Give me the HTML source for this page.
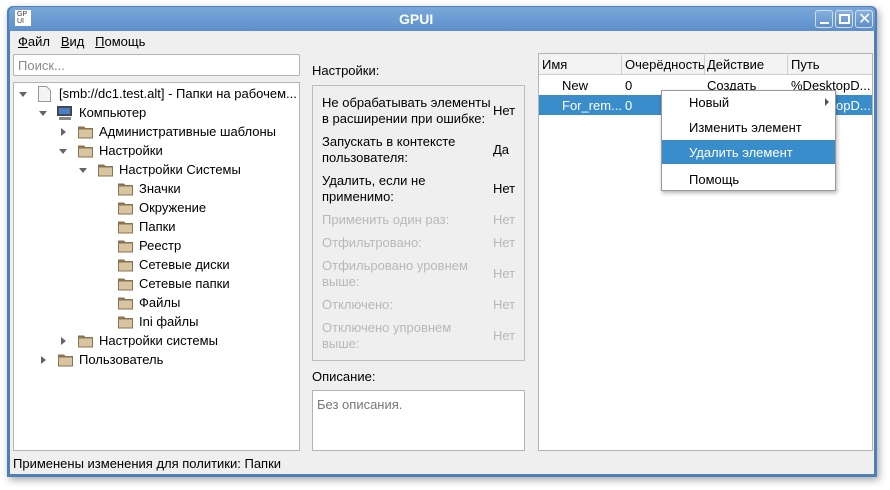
<!DOCTYPE html>
<html><head><meta charset="utf-8"><style>
*{box-sizing:border-box;margin:0;padding:0}
body{width:890px;height:490px;background:#fff;font-family:"Liberation Sans","DejaVu Sans",sans-serif;font-size:13px;color:#000;position:relative;overflow:hidden}
.a{position:absolute;white-space:nowrap}
.win{position:absolute;left:7px;top:6px;width:870px;height:471px;background:#4f7fb9;border-radius:6px 6px 0 0;box-shadow:2px 3px 8px rgba(0,0,0,.35)}
.tb{position:absolute;left:2px;top:1px;right:2px;height:24px;background:linear-gradient(#7aa8da,#5d8fcb);border-radius:5px 5px 0 0}
.body{position:absolute;left:3px;top:25px;right:3px;bottom:3px;background:#efefef}
.box{position:absolute;background:#fff;border:1px solid #b4b4b4}
.gb{position:absolute;border:1px solid #bdbdbd}
.fold{position:absolute;width:17px;height:14px}
.tri{position:absolute;width:0;height:0}
.td{border-left:4px solid transparent;border-right:4px solid transparent;border-top:5px solid #666}
.tr{border-top:4px solid transparent;border-bottom:4px solid transparent;border-left:5px solid #666}
.dis{color:#b8b8b8}
.wb{position:absolute;top:3px;width:18px;height:18px;border:1px solid #cfe0f3;border-radius:3px;background:linear-gradient(#86b0de,#5f8fc9)}
</style></head><body>
<svg width="0" height="0" style="position:absolute"><defs>
<symbol id="f" viewBox="0 0 17 14"><path d="M1 1.5h6l1.5 1.5H16v10.5H1z" fill="#8a7352"/><rect x="1.5" y="4" width="14" height="9" fill="#d9c4a0" stroke="#8a7352" stroke-width="1"/></symbol>
</defs></svg>
<div class="win">
<div class="tb">
<div class="a" style="left:6px;top:3px;width:16px;height:16px;background:#fff;font-size:7px;line-height:7px;padding:1px 2px;color:#333">GP<br>UI</div>
<div class="a" style="left:390px;top:4px;color:#fff;font-weight:bold;font-size:14px">GPUI</div>
<div class="wb" style="left:806px"><div class="a" style="left:4px;top:11px;width:9px;height:2px;background:#fff"></div></div>
<div class="wb" style="left:826px"><div class="a" style="left:3px;top:3px;width:11px;height:10px;border:2px solid #fff"></div></div>
<div class="wb" style="left:846px"><div class="a" style="left:2px;top:-2px;color:#fff;font-size:16px">✕</div></div>
</div>
<div class="body">
<div class="a" style="left:8px;top:3px"><u>Ф</u>айл&nbsp;&nbsp;&nbsp;<u>В</u>ид&nbsp;&nbsp;&nbsp;<u>П</u>омощь</div>
<div class="box" style="left:3px;top:23px;width:287px;height:22px;border-radius:2px"><span class="a" style="left:4px;top:3px;color:#888">Поиск...</span></div>
<div class="box" style="left:3px;top:51px;width:287px;height:369px"></div>
<div class="a" style="left:3px;top:425px">Применены изменения для политики: Папки</div>
<div class="a" style="left:302px;top:32px">Настройки:</div>
<div class="gb" style="left:302px;top:54px;width:213px;height:276px"></div>
<div class="a" style="left:302px;top:338px">Описание:</div>
<div class="box" style="left:302px;top:359px;width:213px;height:61px"><span class="a" style="left:4px;top:6px;color:#777">Без описания.</span></div>
<div class="box" style="left:528px;top:22px;width:335px;height:398px"></div>
</div>
</div>
<!-- tree -->
<div class="tri td" style="left:19px;top:92px"></div>
<svg class="a" style="left:38px;top:86px" width="13" height="16"><path d="M.5 .5h8l4 4v11H.5z" fill="#f4f4f4" stroke="#999"/></svg>
<div class="a" style="left:59px;top:86px">[smb://dc1.test.alt] - Папки на рабочем...</div>
<div class="tri td" style="left:39px;top:111px"></div>
<svg class="a" style="left:56px;top:105px" width="18" height="16"><rect x="1.5" y="1.5" width="14" height="9" fill="#3b4b6b" stroke="#444"/><rect x="3" y="3" width="11" height="6" fill="#4d7ec0"/><rect x="3" y="12" width="12" height="3" fill="#888"/></svg>
<div class="a" style="left:79px;top:105px">Компьютер</div>
<div class="tri tr" style="left:61px;top:128px"></div><svg class="fold" style="left:77px;top:125px"><use href="#f"/></svg><div class="a" style="left:99px;top:124px">Административные шаблоны</div>
<div class="tri td" style="left:59px;top:149px"></div><svg class="fold" style="left:77px;top:144px"><use href="#f"/></svg><div class="a" style="left:99px;top:143px">Настройки</div>
<div class="tri td" style="left:79px;top:168px"></div><svg class="fold" style="left:97px;top:163px"><use href="#f"/></svg><div class="a" style="left:119px;top:162px">Настройки Системы</div>
<svg class="fold" style="left:117px;top:182px"><use href="#f"/></svg><div class="a" style="left:139px;top:181px">Значки</div>
<svg class="fold" style="left:117px;top:201px"><use href="#f"/></svg><div class="a" style="left:139px;top:200px">Окружение</div>
<svg class="fold" style="left:117px;top:220px"><use href="#f"/></svg><div class="a" style="left:139px;top:219px">Папки</div>
<svg class="fold" style="left:117px;top:239px"><use href="#f"/></svg><div class="a" style="left:139px;top:238px">Реестр</div>
<svg class="fold" style="left:117px;top:258px"><use href="#f"/></svg><div class="a" style="left:139px;top:257px">Сетевые диски</div>
<svg class="fold" style="left:117px;top:277px"><use href="#f"/></svg><div class="a" style="left:139px;top:276px">Сетевые папки</div>
<svg class="fold" style="left:117px;top:296px"><use href="#f"/></svg><div class="a" style="left:139px;top:295px">Файлы</div>
<svg class="fold" style="left:117px;top:315px"><use href="#f"/></svg><div class="a" style="left:139px;top:314px">Ini файлы</div>
<div class="tri tr" style="left:61px;top:337px"></div><svg class="fold" style="left:77px;top:334px"><use href="#f"/></svg><div class="a" style="left:99px;top:333px">Настройки системы</div>
<div class="tri tr" style="left:41px;top:356px"></div><svg class="fold" style="left:57px;top:353px"><use href="#f"/></svg><div class="a" style="left:79px;top:352px">Пользователь</div>
<!-- settings -->
<div class="a" style="left:322px;top:95px;line-height:16px">Не обрабатывать элементы<br>в расширении при ошибке:</div><div class="a" style="left:493px;top:103px">Нет</div>
<div class="a" style="left:322px;top:134px;line-height:16px">Запускать в контексте<br>пользователя:</div><div class="a" style="left:493px;top:142px">Да</div>
<div class="a" style="left:322px;top:173px;line-height:16px">Удалить, если не<br>применимо:</div><div class="a" style="left:493px;top:181px">Нет</div>
<div class="a dis" style="left:322px;top:212px">Применить один раз:</div><div class="a dis" style="left:493px;top:212px">Нет</div>
<div class="a dis" style="left:322px;top:235px">Отфильтровано:</div><div class="a dis" style="left:493px;top:235px">Нет</div>
<div class="a dis" style="left:322px;top:258px;line-height:16px">Отфильровано уровнем<br>выше:</div><div class="a dis" style="left:493px;top:266px">Нет</div>
<div class="a dis" style="left:322px;top:297px">Отключено:</div><div class="a dis" style="left:493px;top:297px">Нет</div>
<div class="a dis" style="left:322px;top:320px;line-height:16px">Отключено упровнем<br>выше:</div><div class="a dis" style="left:493px;top:328px">Нет</div>
<!-- table -->
<div class="a" style="left:539px;top:54px;width:333px;height:21px;background:#f3f3f3;border-bottom:1px solid #ccc"></div>
<div class="a" style="left:621px;top:55px;width:1px;height:19px;background:#ccc"></div>
<div class="a" style="left:704px;top:55px;width:1px;height:19px;background:#ccc"></div>
<div class="a" style="left:787px;top:55px;width:1px;height:19px;background:#ccc"></div>
<div class="a" style="left:542px;top:57px">Имя</div><div class="a" style="left:625px;top:57px">Очерёдность</div><div class="a" style="left:707px;top:57px">Действие</div><div class="a" style="left:791px;top:57px">Путь</div>
<div class="a" style="left:562px;top:78px">New</div><div class="a" style="left:625px;top:78px">0</div><div class="a" style="left:707px;top:78px">Создать</div><div class="a" style="left:791px;top:78px">%DesktopD...</div>
<div class="a" style="left:539px;top:95px;width:333px;height:20px;background:#3a8dcb"></div>
<div class="a" style="left:562px;top:98px;color:#fff">For_rem...</div><div class="a" style="left:625px;top:98px;color:#fff">0</div><div class="a" style="left:836px;top:98px;color:#fff">opD...</div>
<!-- context menu -->
<div class="a" style="left:661px;top:90px;width:175px;height:101px;background:#fff;border:1px solid #999;box-shadow:1px 2px 4px rgba(0,0,0,.3)"></div>
<div class="a" style="left:689px;top:95px">Новый</div>
<div class="a" style="left:825px;top:98px;border-top:4px solid transparent;border-bottom:4px solid transparent;border-left:4px solid #555"></div>
<div class="a" style="left:689px;top:120px">Изменить элемент</div>
<div class="a" style="left:662px;top:140px;width:173px;height:24px;background:#3a8dcb"></div>
<div class="a" style="left:689px;top:145px;color:#fff">Удалить элемент</div>
<div class="a" style="left:689px;top:172px">Помощь</div>
</body></html>
